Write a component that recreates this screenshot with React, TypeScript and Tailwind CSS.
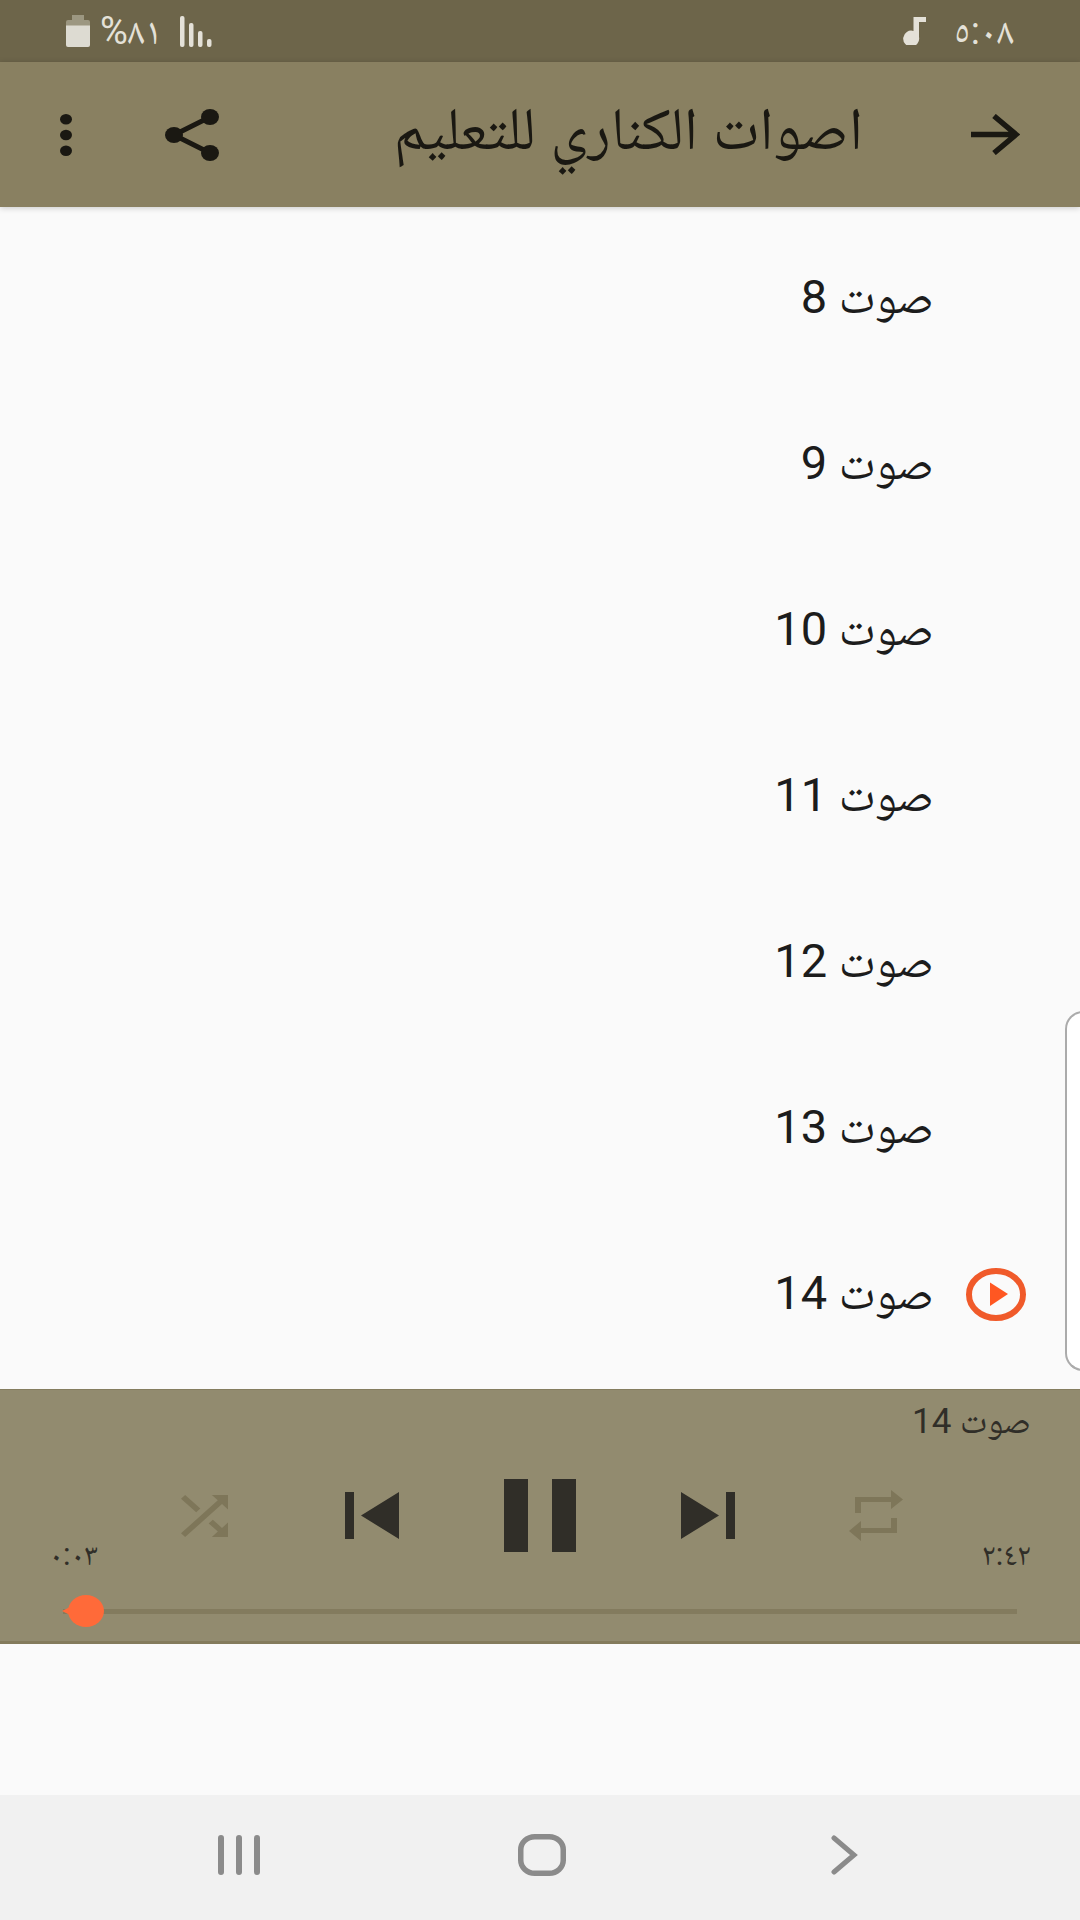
import React, { useState } from 'react';

const sounds = [8, 9, 10, 11, 12, 13, 14];

function StatusBar() {
  return (
    <div className="flex h-[62px] items-center justify-between bg-[#6d654a] px-[66px] text-[#e4e1d8]">
      <div className="flex items-center gap-[28px]">
        <span className="text-[38px] leading-[40px]">٥:٠٨</span>
        <svg className="h-[28px] w-[23px]" viewBox="0 0 23 28" fill="currentColor">
          <path d="M10.500 0H23V5H16V20a8 8 0 1 1-5.500-6Z" />
        </svg>
      </div>
      <div className="flex items-center gap-[10px]">
        <svg className="me-2 h-[31px] w-[32px]" viewBox="0 0 32 31" fill="currentColor">
          <rect x="0" y="0" width="4.500" height="31" rx="2" />
          <rect x="9" y="7" width="4.500" height="24" rx="2" />
          <rect x="18" y="15" width="4.500" height="16" rx="2" />
          <rect x="27" y="23" width="4.500" height="8" rx="2" />
        </svg>
        <span className="text-[38px] leading-[40px]">٨١%</span>
        <svg className="h-[32px] w-[24px]" viewBox="0 0 24 32">
          <path d="M6 0H18V5H22a2 2 0 0 1 2 2V12H0V7a2 2 0 0 1 2-2H6Z" fill="#9c9781" />
          <path d="M0 10.500H24V30a2 2 0 0 1-2 2H2a2 2 0 0 1-2-2Z" fill="#dddbd2" />
        </svg>
      </div>
    </div>
  );
}

function Header() {
  return (
    <header className="relative flex h-[145px] items-center bg-[#898061] px-[60px] text-[#1a1812] shadow-[0_1px_6px_rgba(0,0,0,0.2)]">
      <button aria-label="رجوع">
        <svg className="h-[41px] w-[49px]" viewBox="0 0 49 41" fill="none" stroke="currentColor" strokeWidth="5.500">
          <path d="M0 20.500H45M23 2L45 20.500L23 39" />
        </svg>
      </button>
      <h1 className="ms-[108px] flex-1 pb-3 text-[60px] leading-[64px]">اصوات الكناري للتعليم</h1>
      <div className="flex items-center gap-[93px]">
        <button aria-label="مشاركة">
          <svg className="h-[52px] w-[54px]" viewBox="0 0 54 52" fill="currentColor">
            <path d="M45 8L9 26L45 44" fill="none" stroke="currentColor" strokeWidth="5" />
            <ellipse cx="45" cy="8" rx="9" ry="8" />
            <ellipse cx="9" cy="26" rx="9" ry="8" />
            <ellipse cx="45" cy="44" rx="9" ry="8" />
          </svg>
        </button>
        <button aria-label="المزيد">
          <svg className="h-[42px] w-[12px]" viewBox="0 0 12 42" fill="currentColor">
            <ellipse cx="6" cy="5.200" rx="6" ry="5.200" />
            <ellipse cx="6" cy="21" rx="6" ry="5.200" />
            <ellipse cx="6" cy="36.800" rx="6" ry="5.200" />
          </svg>
        </button>
      </div>
    </header>
  );
}

function PlayingIcon() {
  return (
    <svg className="h-[53px] w-[60px]" viewBox="0 0 60 53">
      <ellipse cx="30" cy="26.500" rx="27" ry="23.500" fill="none" stroke="#f05a2a" strokeWidth="6" />
      <path d="M24 14.500L42 26L24 38Z" fill="#ff5722" />
    </svg>
  );
}

function SoundList({ current, onSelect }: { current: number; onSelect: (n: number) => void }) {
  return (
    <ul className="pt-2 pb-3">
      {sounds.map((n) => (
        <li key={n}>
          <button onClick={() => onSelect(n)} className="flex h-[166px] w-full items-center px-[54px] text-[#1c1c1c]">
            <span className="w-[92px]">{current === n && <PlayingIcon />}</span>
            <span className="pb-[3px] text-[47px] leading-[50px]">صوت {n}</span>
          </button>
        </li>
      ))}
    </ul>
  );
}

function Player({ current }: { current: number }) {
  const [playing, setPlaying] = useState(true);
  const [position, setPosition] = useState(3);

  return (
    <section className="border-t border-b-3 border-t-[#857d5f] border-b-[#837b5c] bg-[#928b6f] text-[#302e28]">
      <p className="px-[49px] pt-[12px] text-[35px] leading-[40px]">صوت {current}</p>
      <div className="mt-[37px] flex h-[92px] px-[49px]">
        <span className="w-[71px] self-end text-[31px] leading-[32px]">٢:٤٢</span>
        <div className="grid h-[73px] flex-1 grid-cols-5 place-items-center">
          <button aria-label="تكرار" className="text-[#7e7659]">
            <svg className="h-[51px] w-[54px]" viewBox="0 0 54 51" fill="currentColor">
              <path d="M6 7H42V0L54 9.500L42 19V12H12V23H6Z" />
              <path d="M48 43H12V51L0 41L12 31V38H42V28H48Z" />
            </svg>
          </button>
          <button aria-label="التالي">
            <svg className="h-[47px] w-[54px]" viewBox="0 0 54 47" fill="currentColor">
              <path d="M0 0L38 23.500L0 47ZM45 0H54V47H45Z" />
            </svg>
          </button>
          <button aria-label="إيقاف مؤقت" onClick={() => setPlaying(!playing)}>
            <svg className="h-[73px] w-[72px]" viewBox="0 0 72 73" fill="currentColor">
              <path d={playing ? 'M0 0H24V73H0ZM48 0H72V73H48Z' : 'M8 0L68 36L8 73Z'} />
            </svg>
          </button>
          <button aria-label="السابق">
            <svg className="h-[47px] w-[54px]" viewBox="0 0 54 47" fill="currentColor">
              <path d="M54 0L16 23.500L54 47ZM0 0H9V47H0Z" />
            </svg>
          </button>
          <button aria-label="عشوائي" className="text-[#7e7659]">
            <svg className="h-[42px] w-[47px]" viewBox="4 4 16 16" preserveAspectRatio="none" fill="currentColor">
              <path d="M10.590 9.170L5.410 4L4 5.410l5.170 5.170 1.420-1.410zM14.500 4l2.040 2.040L4 18.590L5.410 20L17.960 7.460L20 9.500V4h-5.500zm.330 9.410l-1.410 1.410 3.130 3.130L14.500 20H20v-5.500l-2.040 2.040-3.130-3.130z" />
            </svg>
          </button>
        </div>
        <span dir="ltr" className="w-[71px] self-end text-[31px] leading-[32px]">٠:٠٣</span>
      </div>
      <div dir="ltr" className="relative mx-[51px] mt-[24px] mb-[14px] flex h-8 items-center px-[12px]">
        <div className="h-[5px] w-full bg-[#837b5e]" />
        <svg className="absolute left-[11px] h-[12px] w-[20px]" viewBox="0 0 20 12">
          <path d="M0 6L12 0H20V12H12Z" fill="#ff6a39" />
        </svg>
        <input
          type="range"
          aria-label="موضع التشغيل"
          min={0}
          max={162}
          value={position}
          onChange={(e) => setPosition(Number(e.target.value))}
          className="absolute inset-0 h-8 w-full appearance-none bg-transparent [&::-webkit-slider-thumb]:h-8 [&::-webkit-slider-thumb]:w-9 [&::-webkit-slider-thumb]:appearance-none [&::-webkit-slider-thumb]:rounded-[50%] [&::-webkit-slider-thumb]:bg-[#ff6a39]"
        />
      </div>
    </section>
  );
}

function NavBar() {
  return (
    <nav dir="ltr" className="grid h-[125px] grid-cols-3 place-items-center bg-[#f1f1f1] ps-[88px] pe-[84px] text-[#8b8b8b]">
      <button aria-label="التطبيقات الأخيرة" className="pb-[5px]">
        <svg className="h-[40px] w-[42px]" viewBox="0 0 42 40" stroke="currentColor" strokeWidth="6" strokeLinecap="round">
          <path d="M3 3V37M21 3V37M39 3V37" />
        </svg>
      </button>
      <button aria-label="الرئيسية" className="pb-[5px]">
        <svg className="h-[42px] w-[48px]" viewBox="0 0 48 42" fill="none" stroke="currentColor" strokeWidth="5.500">
          <rect x="2.750" y="2.750" width="42.500" height="36.500" rx="14" ry="13" />
        </svg>
      </button>
      <button aria-label="السابق" className="pb-[5px]">
        <svg className="h-[40px] w-[27px]" viewBox="0 0 27 40" fill="none" stroke="currentColor" strokeWidth="5" strokeLinecap="round">
          <path d="M3 3L23 20L3 37" />
        </svg>
      </button>
    </nav>
  );
}

function App() {
  const [current, setCurrent] = useState(14);

  return (
    <div
      dir="rtl"
      className="relative flex min-h-screen flex-col overflow-hidden bg-[#fafafa] font-['Roboto','Noto_Naskh_Arabic','Noto_Sans_Arabic','DejaVu_Sans',sans-serif]"
    >
      <StatusBar />
      <Header />
      <SoundList current={current} onSelect={setCurrent} />
      <Player current={current} />
      <div className="flex-1" />
      <NavBar />

      {/* Edge panel handle */}
      <div className="absolute top-[1011px] -right-1 h-[360px] w-[19px] rounded-l-[18px] border-2 border-[#ababab] bg-white" />
    </div>
  );
}

export default App;
